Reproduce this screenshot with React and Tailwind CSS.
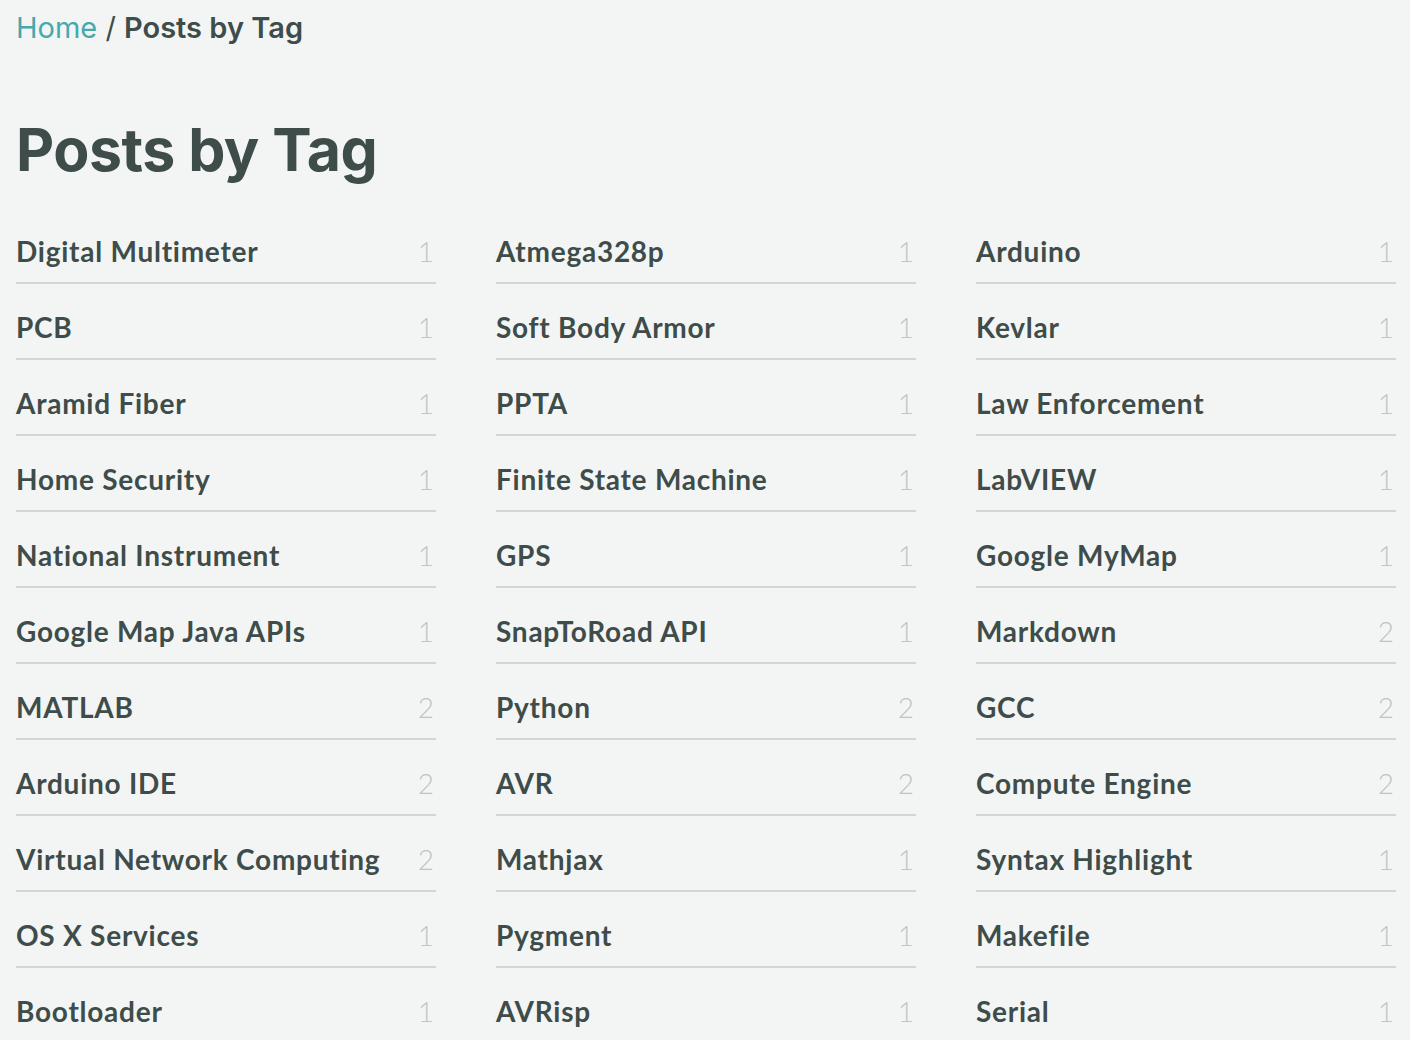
const TAGS = [
  ['Digital Multimeter', 1], ['Atmega328p', 1], ['Arduino', 1],
  ['PCB', 1], ['Soft Body Armor', 1], ['Kevlar', 1],
  ['Aramid Fiber', 1], ['PPTA', 1], ['Law Enforcement', 1],
  ['Home Security', 1], ['Finite State Machine', 1], ['LabVIEW', 1],
  ['National Instrument', 1], ['GPS', 1], ['Google MyMap', 1],
  ['Google Map Java APIs', 1], ['SnapToRoad API', 1], ['Markdown', 2],
  ['MATLAB', 2], ['Python', 2], ['GCC', 2],
  ['Arduino IDE', 2], ['AVR', 2], ['Compute Engine', 2],
  ['Virtual Network Computing', 2], ['Mathjax', 1], ['Syntax Highlight', 1],
  ['OS X Services', 1], ['Pygment', 1], ['Makefile', 1],
  ['Bootloader', 1], ['AVRisp', 1], ['Serial', 1],
]

const App = () => {
  return (
    <div className="min-h-screen bg-[#f3f5f5] px-4 text-[#3e4c4a] font-['Inter',sans-serif]">
      <nav className="pt-[8px] text-[29px] leading-[40px]">
        <a href="#" className="text-[#45a9ad]">Home</a>
        <span> / </span>
        <span className="font-semibold">Posts by Tag</span>
      </nav>

      <h1 className="mt-[70px] text-[59px] leading-[64px] font-bold tracking-[-0.5px]">Posts by Tag</h1>

      <div className="mt-[26px] grid grid-cols-3 gap-x-[60px] w-[1380px]">
        {TAGS.map(([name, count]) => (
          <a
            key={name}
            href="#"
            className="flex items-center justify-between pt-[25px] pb-[13px] border-b-2 border-[#d3d6d6]"
          >
            <span className="text-[28px] leading-[36px] font-bold tracking-[0.75px] font-['Lato',sans-serif]">{name}</span>
            <span className="text-[28px] leading-[36px] font-light text-[#bfc5c5] pr-[2px] font-['Lato',sans-serif]">{count}</span>
          </a>
        ))}
      </div>
    </div>
  )
}

export default App
